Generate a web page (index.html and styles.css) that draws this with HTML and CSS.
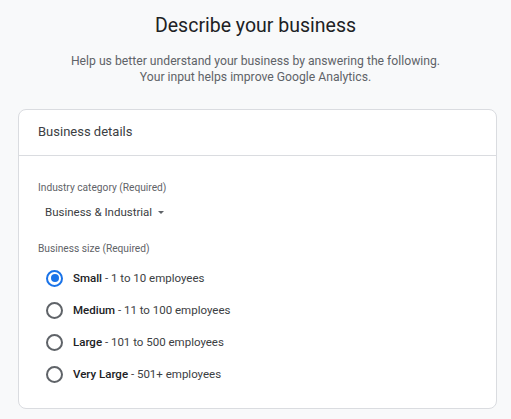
FILE: index.html
```html
<!DOCTYPE html>
<html>
<head>
<meta charset="utf-8">
<link rel="stylesheet" href="styles.css">
</head>
<body>
<div class="page">
  <h1 class="title">Describe your business</h1>
  <p class="subtitle">Help us better understand your business by answering the following.<br>Your input helps improve Google Analytics.</p>
  <div class="card">
    <div class="card-head">Business details</div>
    <div class="card-body">
      <div class="label">Industry category (Required)</div>
      <div class="select">Business &amp; Industrial <span class="caret"></span></div>
      <div class="label size-label">Business size (Required)</div>
      <div class="radios">
        <div class="radio-row"><span class="radio checked"></span><span class="opt"><b>Small</b> - 1 to 10 employees</span></div>
        <div class="radio-row"><span class="radio"></span><span class="opt"><b>Medium</b> - 11 to 100 employees</span></div>
        <div class="radio-row"><span class="radio"></span><span class="opt"><b>Large</b> - 101 to 500 employees</span></div>
        <div class="radio-row"><span class="radio"></span><span class="opt"><b>Very Large</b> - 501+ employees</span></div>
      </div>
    </div>
  </div>
</div>
</body>
</html>
```
FILE: styles.css
```css
html, body { margin: 0; padding: 0; }
body {
  background: #f8f9fa;
  font-family: Roboto, "Liberation Sans", sans-serif;
  width: 511px;
  height: 419px;
  overflow: hidden;
}
.page { padding-top: 12px; }
.title {
  margin: 0;
  text-align: center;
  font-family: Roboto, "Liberation Sans", sans-serif;
  font-weight: 400;
  font-size: 19.5px;
  line-height: 28px;
  color: #202124;
}
.subtitle {
  margin: 13px 0 0;
  text-align: center;
  font-size: 12.2px;
  line-height: 16px;
  font-weight: 400;
  color: #5f6368;
}
.card {
  margin: 24px 14px 0 18px;
  background: #fff;
  border: 1px solid #dadce0;
  border-radius: 8px;
  height: 300px;
  box-sizing: border-box;
}
.card-head {
  height: 46px;
  box-sizing: border-box;
  padding: 13px 0 0 19px;
  font-size: 13px;
  line-height: 18px;
  color: #3c4043;
  border-bottom: 1px solid #dadce0;
}
.card-body { padding: 25px 0 0 19px; }
.label {
  font-size: 10.2px;
  line-height: 14px;
  color: #5f6368;
}
.select {
  margin-top: 9px;
  margin-left: 7px;
  font-size: 11.5px;
  line-height: 16px;
  color: #3c4043;
  display: flex;
  align-items: center;
  gap: 6px;
}
.caret {
  width: 0; height: 0;
  border-left: 3.5px solid transparent;
  border-right: 3.5px solid transparent;
  border-top: 3.5px solid #5f6368;
}
.size-label { margin-top: 22px; }
.radios { margin-top: 13px; display: flex; flex-direction: column; gap: 14px; }
.radio-row {
  display: flex;
  align-items: center;
  height: 18px;
  padding-left: 8px;
  gap: 10px;
}
.radio {
  width: 13px; height: 13px;
  border: 2px solid #5f6368;
  border-radius: 50%;
  position: relative;
  flex: none;
}
.radio.checked { border-color: #1a73e8; }
.radio.checked::after {
  content: "";
  position: absolute;
  left: 2.5px; top: 2.5px;
  width: 8px; height: 8px;
  border-radius: 50%;
  background: #1a73e8;
}
.opt {
  font-size: 11.5px;
  line-height: 16px;
  color: #3c4043;
}
.opt b { font-weight: 500; color: #202124; }
```
